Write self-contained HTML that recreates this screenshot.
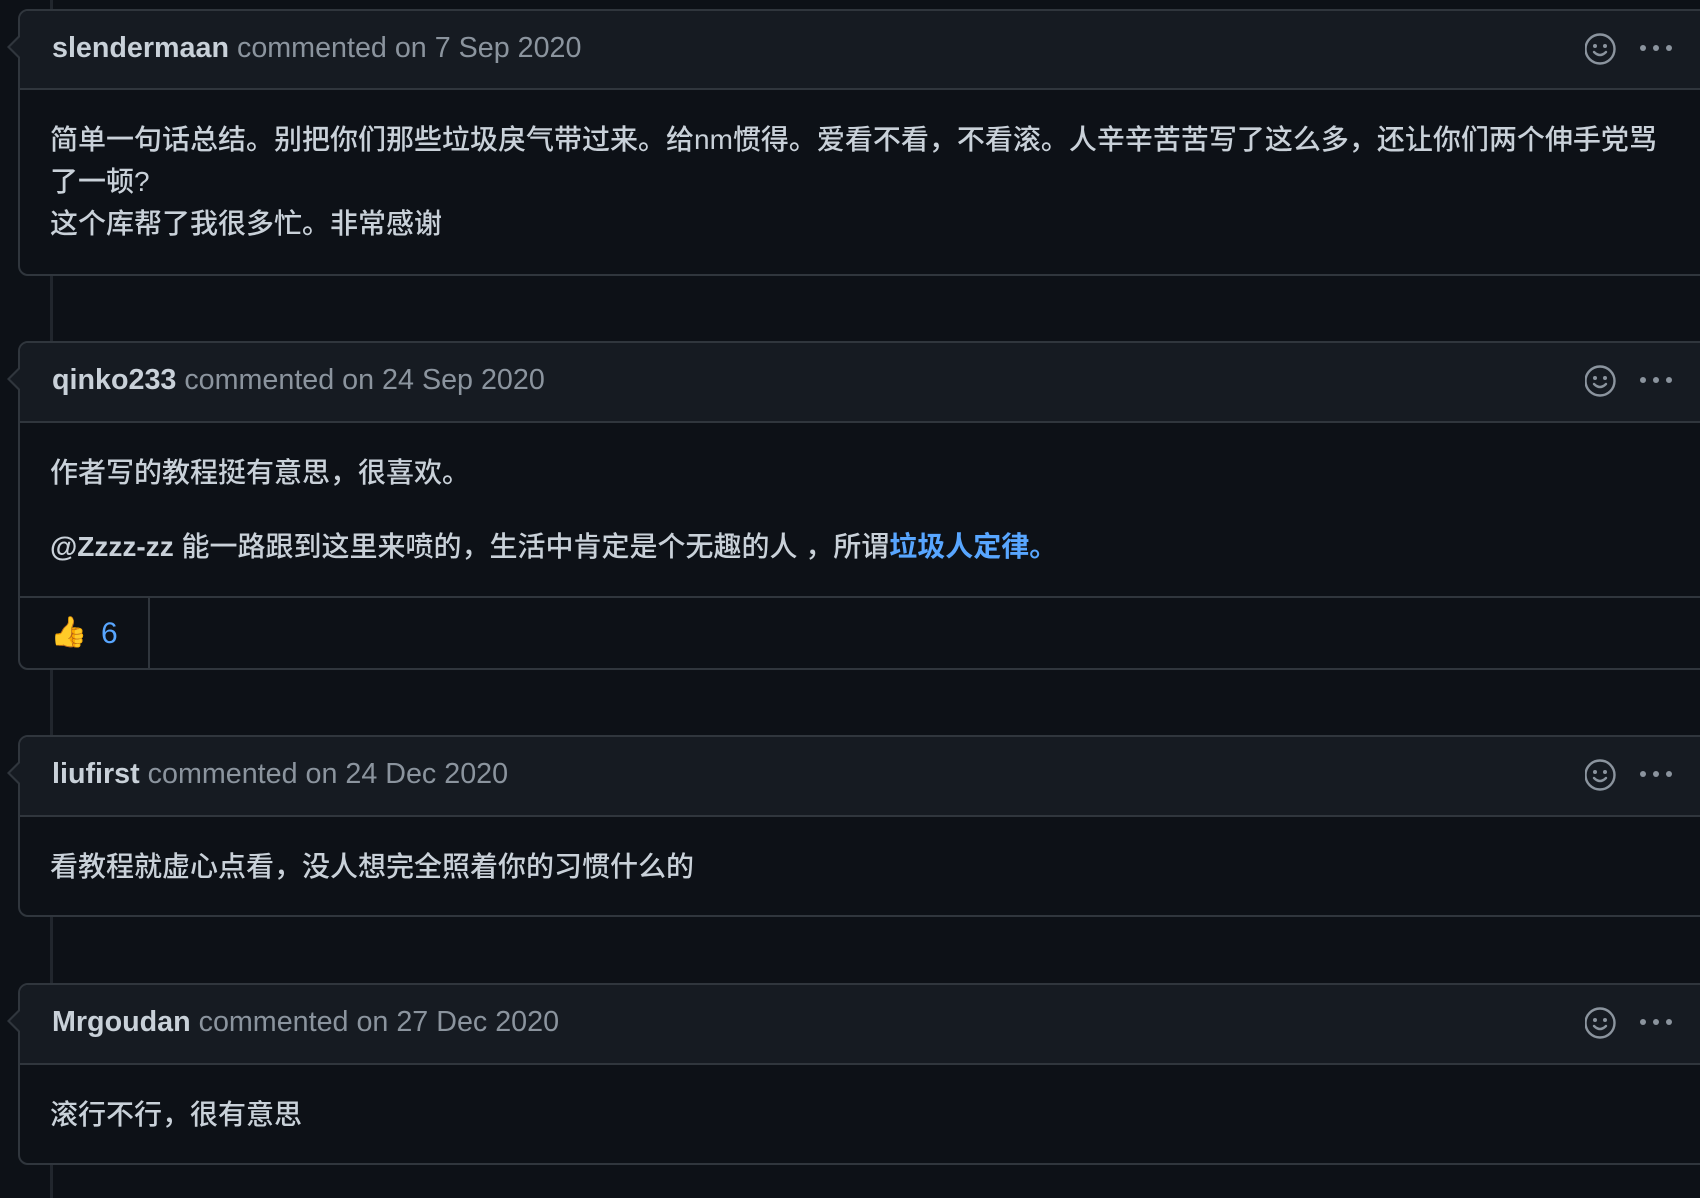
<!DOCTYPE html>
<html><head><meta charset="utf-8"><style>
body{margin:0;width:1700px;height:1198px;background:#0d1117;overflow:hidden;position:relative;font-family:"Liberation Sans","Noto Sans CJK SC",sans-serif;color:#c9d1d9}
.line{position:absolute;left:50px;top:0;width:3px;height:1198px;background:#21262d}
.box{position:absolute;left:18px;width:1700px;border:2px solid #30363d;border-radius:10px;background:#0d1117;box-sizing:border-box}
.hd{position:absolute;left:0;right:0;top:0;background:#161b22;border-bottom:2px solid #30363d;border-radius:8px 8px 0 0;box-sizing:border-box}
.hd .t{position:absolute;left:32px;font-size:28.7px;color:#8b949e}
.hd b{color:#c9d1d9}
.arrow{position:absolute;left:-13px;width:0;height:0;border-top:12px solid transparent;border-bottom:12px solid transparent;border-right:12px solid #30363d}
.arrow:after{content:"";position:absolute;left:3px;top:-10px;border-top:10px solid transparent;border-bottom:10px solid transparent;border-right:10px solid #161b22}
.ic{position:absolute;left:1565px}
.p{position:absolute;left:30px;font-size:28px;line-height:42px;white-space:nowrap;font-weight:500}
a{color:#58a6ff;font-weight:bold;text-decoration:none}
</style></head><body>
<div class="line"></div>

<div class="box" style="top:9px;height:267px">
 <div class="hd" style="height:79px"><div class="arrow" style="top:24px"></div><div class="t" style="top:21px"><b>slendermaan</b> commented on 7 Sep 2020</div>
 <svg class="ic" style="top:20px" width="110" height="36" viewBox="0 0 110 36"><circle cx="15" cy="18" r="14.5" fill="none" stroke="#8b949e" stroke-width="2.4"/><circle cx="10" cy="15" r="2" fill="#8b949e"/><circle cx="20" cy="15" r="2" fill="#8b949e"/><path d="M9 21q6 6 12 0" fill="none" stroke="#8b949e" stroke-width="2.4" stroke-linecap="round"/><circle cx="58" cy="17" r="3" fill="#8b949e"/><circle cx="71" cy="17" r="3" fill="#8b949e"/><circle cx="84" cy="17" r="3" fill="#8b949e"/></svg></div>
 <div class="p" style="top:108px">简单一句话总结。别把你们那些垃圾戾气带过来。给nm惯得。爱看不看，不看滚。人辛辛苦苦写了这么多，还让你们两个伸手党骂<br>了一顿?<br>这个库帮了我很多忙。非常感谢</div>
</div>

<div class="box" style="top:341px;height:329px">
 <div class="hd" style="height:80px"><div class="arrow" style="top:24px"></div><div class="t" style="top:21px"><b>qinko233</b> commented on 24 Sep 2020</div>
 <svg class="ic" style="top:20px" width="110" height="36" viewBox="0 0 110 36"><circle cx="15" cy="18" r="14.5" fill="none" stroke="#8b949e" stroke-width="2.4"/><circle cx="10" cy="15" r="2" fill="#8b949e"/><circle cx="20" cy="15" r="2" fill="#8b949e"/><path d="M9 21q6 6 12 0" fill="none" stroke="#8b949e" stroke-width="2.4" stroke-linecap="round"/><circle cx="58" cy="17" r="3" fill="#8b949e"/><circle cx="71" cy="17" r="3" fill="#8b949e"/><circle cx="84" cy="17" r="3" fill="#8b949e"/></svg></div>
 <div class="p" style="top:109px">作者写的教程挺有意思，很喜欢。</div>
 <div class="p" style="top:183px"><b style="color:#c9d1d9">@Zzzz-zz</b> 能一路跟到这里来喷的，生活中肯定是个无趣的人 ，所谓<a>垃圾人定律。</a></div>
 <div style="position:absolute;left:0;right:0;top:253px;border-top:2px solid #30363d"></div>
 <div style="position:absolute;left:128px;top:253px;height:74px;border-left:2px solid #30363d"></div>
 <div style="position:absolute;left:30px;top:272px;font-size:30px;font-family:'Noto Color Emoji',sans-serif">👍</div>
 <div style="position:absolute;left:81px;top:274px;font-size:30px;color:#58a6ff">6</div>
</div>

<div class="box" style="top:735px;height:182px">
 <div class="hd" style="height:80px"><div class="arrow" style="top:24px"></div><div class="t" style="top:21px"><b>liufirst</b> commented on 24 Dec 2020</div>
 <svg class="ic" style="top:20px" width="110" height="36" viewBox="0 0 110 36"><circle cx="15" cy="18" r="14.5" fill="none" stroke="#8b949e" stroke-width="2.4"/><circle cx="10" cy="15" r="2" fill="#8b949e"/><circle cx="20" cy="15" r="2" fill="#8b949e"/><path d="M9 21q6 6 12 0" fill="none" stroke="#8b949e" stroke-width="2.4" stroke-linecap="round"/><circle cx="58" cy="17" r="3" fill="#8b949e"/><circle cx="71" cy="17" r="3" fill="#8b949e"/><circle cx="84" cy="17" r="3" fill="#8b949e"/></svg></div>
 <div class="p" style="top:109px">看教程就虚心点看，没人想完全照着你的习惯什么的</div>
</div>

<div class="box" style="top:983px;height:182px">
 <div class="hd" style="height:80px"><div class="arrow" style="top:24px"></div><div class="t" style="top:21px"><b>Mrgoudan</b> commented on 27 Dec 2020</div>
 <svg class="ic" style="top:20px" width="110" height="36" viewBox="0 0 110 36"><circle cx="15" cy="18" r="14.5" fill="none" stroke="#8b949e" stroke-width="2.4"/><circle cx="10" cy="15" r="2" fill="#8b949e"/><circle cx="20" cy="15" r="2" fill="#8b949e"/><path d="M9 21q6 6 12 0" fill="none" stroke="#8b949e" stroke-width="2.4" stroke-linecap="round"/><circle cx="58" cy="17" r="3" fill="#8b949e"/><circle cx="71" cy="17" r="3" fill="#8b949e"/><circle cx="84" cy="17" r="3" fill="#8b949e"/></svg></div>
 <div class="p" style="top:109px">滚行不行，很有意思</div>
</div>
</body></html>
